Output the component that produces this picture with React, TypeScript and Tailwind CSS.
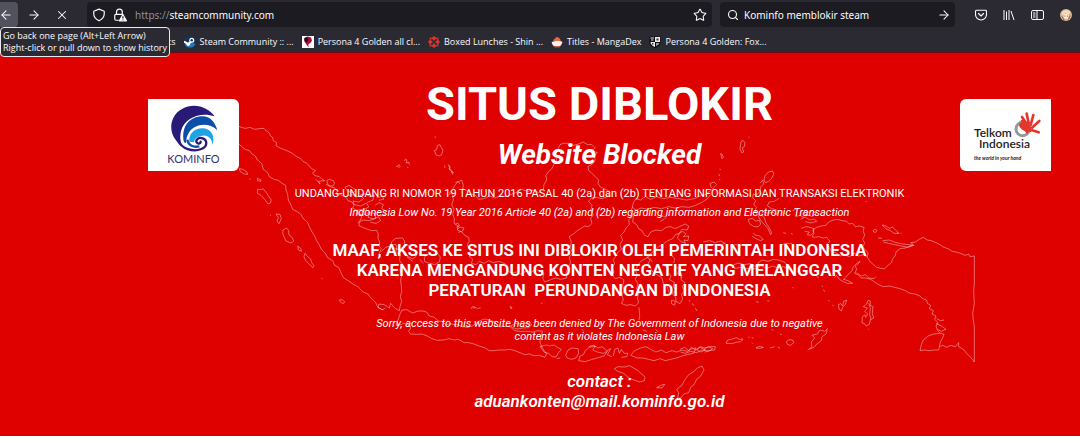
import type { ReactNode } from "react";
import { ArrowLeft, ArrowRight, Search, Star, X } from "lucide-react";

const bookmarks: { label: string; icon: ReactNode }[] = [
  { label: "Steam Community :: ...", icon: <SteamIcon /> },
  { label: "Persona 4 Golden all cl...", icon: <PersonaIcon /> },
  { label: "Boxed Lunches - Shin ...", icon: <FandomIcon /> },
  { label: "Titles - MangaDex", icon: <MangaDexIcon /> },
  { label: "Persona 4 Golden: Fox...", icon: <ShieldLogo /> },
];

function SteamIcon() {
  return (
    <svg viewBox="0 0 24 24" className="size-3 shrink-0">
      <circle cx="12" cy="12" r="12" fill="#12355f" />
      <path d="M1 16a12 12 0 0 0 22 0L14 12z" fill="#2a77b5" />
      <path d="M0 11l9 5 5-5" stroke="#fff" strokeWidth="4" fill="none" />
      <circle cx="15.500" cy="8.500" r="5" fill="#fff" />
      <circle cx="15.500" cy="8.500" r="2.500" fill="#12355f" />
      <circle cx="8.500" cy="16.500" r="3.500" fill="#fff" />
    </svg>
  );
}

function PersonaIcon() {
  return (
    <svg viewBox="0 0 24 24" className="size-3 shrink-0">
      <path d="M0 0h24v24H0z" fill="#fff" />
      <path d="M4 4l7-3 7 2 2 6-3 5-4 2 0 7-4-6-4-6z" fill="#a01038" />
      <path d="M5 5l5-3 3 5-4 6-4-3z" fill="#24101c" />
    </svg>
  );
}

function FandomIcon() {
  return (
    <svg viewBox="0 0 24 24" className="size-3 shrink-0" fill="#d9362c">
      <path d="M12 0l5 4-5 6-5-6zM12 24l5-4-5-6-5 6zM0 12l4-5 6 5-6 5zM24 12l-4-5-6 5 6 5z" />
      <path d="M3 3l6 1-5 5zM21 3l-6 1 5 5zM3 21l6-1-5-5zM21 21l-6-1 5-5z" />
    </svg>
  );
}

function MangaDexIcon() {
  return (
    <svg viewBox="0 0 24 24" className="size-3 shrink-0">
      <path d="M4 11C5 5 9 6 10 2c6 0 9 4 10 9z" fill="#e5674c" />
      <path d="M1 13c4-4 18-4 22-1l-3 7c-4 3-12 3-16 0z" fill="#fbf3ee" />
      <path d="M4 19c4 2 12 2 16 0l-3 4H7z" fill="#c94f3a" />
    </svg>
  );
}

function ShieldLogo() {
  return (
    <svg viewBox="0 0 24 24" className="size-3 shrink-0">
      <path d="M1 1h22v12c0 6-6 9-11 11C7 22 1 19 1 13z" fill="#0c0c10" />
      <path d="M12 2h10v10H12z" fill="#ececec" />
      <path d="M3 12h9v10c-5-2-9-5-9-10z" fill="#ececec" />
      <path d="M3 4h7M4 8h5" stroke="#ececec" strokeWidth="2" />
      <path d="M15 5h4v4h-4zM6 14h3v3H6z" fill="#33333b" />
      <path d="M14 14h7c-1 3-4 5-7 6z" fill="#9a9aa2" />
    </svg>
  );
}

function ShieldOutline() {
  return (
    <svg viewBox="0 0 24 24" className="size-3.5 shrink-0" fill="none" stroke="currentColor" strokeWidth="2" strokeLinejoin="round">
      <path d="M12 2l9 3.500v4.500c0 5.500-3.500 9.500-9 12-5.500-2.500-9-6.500-9-12V5.500z" />
    </svg>
  );
}

function LockWarning() {
  return (
    <svg viewBox="0 0 24 24" className="size-3.5 shrink-0" fill="none" stroke="currentColor" strokeWidth="2">
      <path d="M6 11V7a5 5 0 0 1 10 0v4" />
      <path d="M10 21H5a2 2 0 0 1-2-2v-6a2 2 0 0 1 2-2h12" />
      <path d="M17 11l6 11H11z" fill="currentColor" strokeLinejoin="round" />
      <path d="M17 14v4M17 19.500v1.500" stroke="#1c1b22" />
    </svg>
  );
}

function PocketIcon() {
  return (
    <svg viewBox="0 0 24 24" className="size-3" fill="none" stroke="currentColor" strokeWidth="2.200" strokeLinecap="round" strokeLinejoin="round">
      <path d="M3 2.500h18a2 2 0 0 1 2 2V11a11 11 0 0 1-22 0V4.500a2 2 0 0 1 2-2z" />
      <path d="M7 9l5 5 5-5" />
    </svg>
  );
}

function LibraryIcon() {
  return (
    <svg viewBox="0 0 24 24" className="size-3" fill="none" stroke="currentColor" strokeWidth="2">
      <path d="M2 2v20M7 5v17M12 2v20M16 4l6 18" />
    </svg>
  );
}

function SidebarIcon() {
  return (
    <svg viewBox="0 0 26 24" className="h-3 w-[13px]" fill="none" stroke="currentColor" strokeWidth="2">
      <rect x="1" y="3" width="24" height="18" rx="3" />
      <path d="M12 3v18M4 8h5M4 12h5M4 16h5" />
    </svg>
  );
}

function Avatar() {
  return (
    <svg viewBox="0 0 24 24" className="size-3">
      <circle cx="12" cy="12" r="12" fill="#d9b48c" />
      <path d="M3 8c4-7 14-8 18-1l-4 4-6-3-6 5z" fill="#f0dcb8" />
      <path d="M8 11l5-2 5 4-2 6-6 1-3-4z" fill="#fbe9df" />
      <path d="M4 15l4 7M20 13l-3 8" stroke="#8b6248" strokeWidth="2" />
      <circle cx="10" cy="14" r="1.200" fill="#7a3d3d" />
      <circle cx="15" cy="14" r="1.200" fill="#7a3d3d" />
    </svg>
  );
}

function KominfoLogo() {
  return (
    <div className="flex h-[72px] flex-col items-center rounded-r-md bg-white pt-1.5">
      <svg viewBox="0 0 144 144" className="size-12 shrink-0" role="img" aria-label="Kominfo">
        <path d="M36 120C-8 96-6 34 36 12c36-20 78-6 98 22C92 20 44 38 33 78c-4 18-2 32 3 42z" fill="#2a1a78" />
        <path d="M42 112C32 66 58 34 98 34c22 0 38 18 44 42C116 50 72 56 56 84c-6 12-8 18-8 30z" fill="#0a50a8" />
        <path d="M58 110C56 84 76 68 100 70c24 2 36 24 28 50-2-24-20-34-38-26-12 4-16 8-18 18z" fill="#1fa3e4" />
        <path d="M22 104c14 28 46 38 72 28 18-6 20-26 4-32-12-4-22 4-18 12 4 6 12 4 12-2" fill="none" stroke="#2a1a78" strokeWidth="7" strokeLinecap="round" />
        <path d="M52 104c2 18 20 24 36 20" fill="none" stroke="#0a50a8" strokeWidth="7" />
      </svg>
      <span className="font-[Lato,sans-serif] text-[11px] leading-3 text-[#35306f]">KOMINFO</span>
    </div>
  );
}

function TelkomLogo() {
  return (
    <div className="relative flex h-[72px] flex-col rounded-l-md bg-white pt-7 pl-3.5 font-[Lato,sans-serif] text-[#222]">
      <svg viewBox="0 0 84 84" className="absolute top-3 left-[54px] size-7" role="img" aria-label="Telkom Indonesia">
        <circle cx="26" cy="54" r="20" fill="none" stroke="#96989b" strokeWidth="9" />
        <path d="M16 38c10-8 24-4 28 8 4 10 0 20-6 24-2-12-12-10-18-18-4-4-6-10-4-14z" fill="#e5352c" />
        <path
          d="M24 30c14 2 24 14 24 30M36 36L24 18M44 36L38 8M50 42L58 12M54 50L76 30M54 58l20 6"
          fill="none"
          stroke="#e5352c"
          strokeWidth="8"
          strokeLinecap="round"
        />
      </svg>
      <span className="text-xs leading-[11px] font-semibold">Telkom</span>
      <span className="pl-[5px] text-xs leading-[11px] font-semibold">Indonesia</span>
      <span className="pt-1.5 text-[5px] leading-[6px] font-bold italic">the world in your hand</span>
    </div>
  );
}

// Outline of the archipelago, drawn at three units to the pixel
function IndonesiaMap() {
  return (
    <svg
      viewBox="0 159 3240 1149"
      className="absolute inset-0 size-full"
      fill="none"
      stroke="#fff"
      strokeOpacity="0.5"
      strokeWidth="2.400"
      strokeLinejoin="round"
      aria-hidden="true"
    >
      {/* Sumatra */}
      <g transform="translate(660 330)">
        <path d="M55 48L67 53 77 55 90 52 104 58 118 56 132 55 139 63 147 68 151 77 158 82 160 92 170 98 168 107 182 115 196 120 207 125 216 129 228 139 241 145 250 155 260 159 268 168 275 176 287 182 278 188 283 196 298 200 306 208 314 212 296 214 300 222 288 208M318 222L330 230 345 234 352 244 348 252 364 255 378 262 384 272 396 276 402 286 398 294 412 302 420 310 425 322 418 335 417 347 428 352 440 357 455 362 470 361 475 372 474 386 479 396 477 408 484 416 478 430 482 442M484 425L497 412 513 408 527 402 530 412 528 425 540 437 539 452 548 465 540 480 545 496 542 512 544 528 545 545 541 560 545 574 540 590 538 602 524 594 512 580 508 594 493 584 477 582 474 592 490 600" />
        <path d="M55 100L64 109 75 118 88 122 96 132 106 138 112 150 125 160 130 178 143 188 148 200 162 208 175 211 186 220 197 226 198 240 203 254 205 270 212 283 218 298 232 305 242 312 250 326 262 336 268 350 276 366 284 378 290 392 298 405 304 418 316 430 322 442 338 452 344 466 356 472 362 486 370 503 386 513 400 523 414 530 428 545 444 552 454 566 466 576 474 592 486 600 496 594" />
        <path d="M58 176l10 2 12 7 3 8-10-1-13-8zM88 206l4 3M112 205l10 4 1 5-11-2zM113 238l10 1 6-3 10 12 7 11 7 10-1 10-8 3-10-14-10-11-12-7zM150 315l3 2M168 312l12 1 4 13-7 15-6-8 4-10zM189 360l11-6 6 8 1 13 10 8 4 10-8 6-15-6-6-13-4-10zM233 408l10 8 1 8-9-4zM255 430l7 9 10 8 3 11 7 9-3 6-11-10-12-13-4-10zM304 504l4 3M358 570l8-1 8 6-4 6-8-4z" />
        <path d="M320 212l8-4 12 4 4 8-6 9-13-3zM375 232l12-6 10 7 11 6-7 9-14-3-8-5zM380 258l18-4 9 7 16-4 8 9-15 10-17-3 4 11 19 4 18-9 6 12-14 8-19 1-4 11 22 4 18-8 16 4 2 14-20 7-18-2-16 8M420 255l15-4 16 9 12-4-5 15-17 6M425 308l14-9 11 10-6 13 17 5 14-7 7 12-13 8-18-3M466 285l12-7 12 6-5 12 13 7-4 12-15 3M470 263l17-4 5 8-15 4" />
        <path d="M528 168l5 2 3-6 5 4-5 6M553 153l4-6 4 4-3 8 9-2 1 7M562 170l2 4M644 80l4 3M643 122l7-3 2-12 8-3 4 9 5 8-4 13-8 4-9-4zM672 171l4 2M684 167l6 4-1 9 6 5 3 9M697 184l5 5" />
        <path d="M515 395l12-10 20-1 7 9-2 15 12-2 13 12 11 8 1 12-10 9-18-9-5-13-16-6-14-3-12-10zM613 442l8-9 18 2 13-5 9 11-3 15-13 8-16-4-15-5zM560 440l18 14M600 448l10 12M752 593l5 3M760 590l12 5" />
      </g>

      {/* Java, Borneo and Sulawesi */}
      <g transform="translate(1200 360)">
        <path d="M0 582L6 570 20 569 38 579 54 573 68 573 80 576 88 588 103 592 115 603 125 604 137 614 151 612 172 614 188 620 203 622 218 618 236 604 252 597 268 600 285 606 283 618 298 620 316 619 330 620 344 632 362 634 380 634 398 636 412 632 428 634 422 650 420 668 427 684 440 702 434 712 418 706 402 707 388 702 374 704 360 698 344 692 330 688 314 690 296 690 282 692 268 692 256 684 240 679 222 672 206 668 192 668 176 658 162 660 148 656 130 660 112 661 96 656 82 648 66 642 50 643 32 642 26 634 32 624 28 614 12 610 2 614 -12 616 -6 600z" />
        <path d="M332 618l14-8 20 1 14-2 16 4-10 10-18 1-17 3-12-4zM215 562l6-2 2 6M233 566l9-3M330 560l6 2-2 5zM423 548l3 4M545 628l6 5" />
        <path d="M420 680l19-5 10 3 13-3 10 7 12 6-9 11-7 12-12-1-10-10-13-3zM497 706L504 690 516 684 534 686 536 700 528 714 514 718 502 714zM470 716l11-2M536 722L540 708 550 704 556 692 568 682 586 678 578 690 592 696 610 700 622 694 612 708 598 712 584 716 570 720 556 725zM566 680L580 676 594 684 606 680 620 692 632 686 622 704 636 710M640 708L644 688 654 684 658 700 664 688 672 700 684 700 680 710 664 712M692 706L704 692 722 684 738 680 752 688 768 696 784 690 798 698 816 692 830 696 846 690 862 694 876 686 888 684 880 700 862 704 846 708 830 714 812 718 796 722 780 716 762 722 746 718 728 714 712 714z" />
        <path d="M643 746l11-6 20 1 14-4 14 8 11 6 10 9 12 11-2 11-14 4-20-7-15-7-13-12-18-6zM833 835L836 818 830 808 846 796 854 780 866 764 880 756 892 744 906 738 912 750 902 768 890 778 882 794 872 802 866 818 852 822 842 834zM770 803l15-8 9-2-8 11zM890 690L900 682 916 690 902 696zM912 688L924 680 938 686 926 694 914 696" />
        <path d="M185 180L172 187 164 197 158 208 149 217 158 225 160 240 155 254 162 268 158 282 163 296 162 310 174 318 172 330 186 336 194 346 206 352 208 364 202 374 208 386 212 398 208 410 218 418 214 430 228 434 238 424 252 430 266 422 280 428 298 424 312 430 324 438 322 452 336 460 350 456 362 462 378 454 392 458 404 448 418 452 432 460 428 474 434 486 450 480 466 474 482 478 500 474 498 458 504 442 512 428 508 412 518 398 510 382 514 366 508 350 520 342 532 332 542 326 554 318 566 320 576 310 572 296 580 284 572 272 576 256 566 244 574 234 590 232 606 236 622 230 630 216 618 208 602 202 594 190 596 180 586 170 578 162 566 152 564 140 578 132 586 120 582 108 592 98 576 92 586 84 576 74 562 74 550 66 536 72 520 76 506 70 490 70 480 74" />
        <path d="M185 180L190 196 188 206 202 212 212 222 226 226 236 238 252 236 268 228 284 234 300 228 318 230 336 222 352 216 366 208 382 214 400 210 416 218 430 208 432 194 440 180 438 166 446 154 456 146 462 132 470 120 466 106 472 92 480 74" />
        <path d="M166 312l8-2 4 8-8 3M172 328l8-7 12 3-4 9-13 4M132 136l4 3M144 133l6 6-3 8 8 4 2 9M166 188l8-4 6 8M150 220l-4 6" />
        <path d="M697 262L700 248 708 236 722 240 736 230 752 238 770 230 790 236 812 232 836 236 860 240 882 236 900 228 916 224 930 214 942 202 950 194 942 186 930 190 934 204M697 262L708 270 724 264 742 268 762 262 784 266 806 260 826 264 846 260 868 262 886 256 904 248 920 238 932 224M697 262L692 276 700 290 698 306 710 314 716 326 726 332 734 346 744 350 752 336 768 330 784 332 798 322 812 320 826 326 842 318 856 312 866 318 862 330 846 328 838 340 826 344 818 356 804 362 790 372 776 380 764 392 752 400 742 412 750 420 744 432 752 446 760 458 774 466 786 474 790 490 802 500 806 516M697 290L686 300 688 314 678 324 672 336 662 346 668 360 660 374 664 388 654 396 648 408 640 418 644 432 636 442 642 456 636 466 646 476 660 472 672 480 668 496 672 512 666 526 670 540 664 550 678 556 692 554 706 558 716 548 712 532 718 518 710 506 714 492 706 478 712 464 706 450 714 436 722 424 736 416 748 410" />
        <path d="M838 340L848 334 858 342 850 350 866 348 864 362 852 360 856 370 842 364 832 354zM793 438l12 6-2 14 10 8-4 14 15 7-5 13 10 9-13 12 11 10 1 13 12 7 8-14-4-14 9-10-6-13 8-12-12-8 3-14-13-5 4-11-10-13M815 540l11 4-2 12-10-5zM836 455l9 6-3 12M867 540l3 5M877 550l4 8M886 564l5 9M717 562l2 25-2 14M728 630l12 4M766 628l8 7M780 305l12-7 8-8-14-2-6 8M816 408l8 7-3 14M750 415l7 11" />
      </g>

      {/* Maluku and Papua */}
      <g transform="translate(2040 360)">
        <path d="M183 65l6-4 6 8-2 11-6 3 4 13-6 2-5-12zM122 101l5 2 3 9-4 4zM119 146l3 4M116 162l3 6M118 178l2 3M206 50l2 3M556 243l3 3" />
        <path d="M252 180l3-13 10-11 13-3 3 10-6 12-11 10-8 3zM240 190l8-10 3 12-9 9-2 13-11 12-9-4-2 11 9 9-6 12 9 8-5 10 8 12 8 16 11 12 12 14 8 18 3-5-7-15-10-15-5-16-9-8 5-10 14 5 16-3 11 6 7-8-10-6-13-3-12-9 6-11 15-2 14-9M205 298l12-3 10 8 11-2 4 11-8 9-14-2-12-9zM219 340l9 6 9 1 13 11-8 4-14-6-11-7M310 338l8 2M333 340l5 3" />
        <path d="M70 365l20-3 15 6 17-5 14 7-15 5-19-2-16 3M150 378l18-4 15 3M298 380l15-9 21-1 9 8" />
        <path d="M338 272L348 268M346 290L360 286 372 292M368 280l8-8 10 5 12-5 9 9-10 8-15-4zM362 298l14-7 13 9 14-3 7 7-17 5-17-4M364 325L378 320 390 322 402 326 400 338 392 346 382 344 388 336 374 334" />
        <path d="M404 352L396 350 402 340 398 330 410 322 424 318 438 316 446 306 460 300 472 298 486 302 500 304 508 312 518 310 526 320 538 318 552 322 550 334 554 346 548 358 554 370 548 380 556 390 564 398 562 412 570 424 580 434 590 442 602 445 614 446 624 436 634 428 638 416 646 406 648 396 660 386 676 384 690 378 700 374 692 368 706 366 718 358 730 352 742 360 754 362 768 368 780 374 792 382 804 386 816 394 828 396 842 400 856 406 866 402 870 410 883 408V490L881 512 883 550 878 580 880 600 883 620V726L872 712 860 700 850 688 836 680 836 668 826 680 812 676 800 682 788 676 778 680 776 690 762 690 748 692 734 690 720 692 724 674 730 660 744 648 762 642 780 640 792 642 788 654 782 664 778 678M780 640L772 630 768 618 774 608 764 598 768 588 756 582 760 572 748 566 752 556 742 550 740 540 728 536 720 528 706 522 690 520 676 512 660 506 644 502 628 498 610 500 596 494 584 486 572 478 558 474 544 474 534 464 524 460 530 448 526 438 536 430 540 424 530 430 520 440 516 452 506 462 498 470 490 478 504 482 518 490 502 490 488 484 476 476 470 466 462 474M404 352L416 350 428 354 440 352 450 364 440 372 448 384 456 396 468 398 480 408 494 404 508 410 524 400 536 408 550 404 562 412M530 458L544 468 556 464 566 474 582 476 588 470M768 610L784 618 798 628 784 634 772 628M770 596L782 602 792 600" />
        <path d="M580 332l5-5 6 4-4 6-6-1zM606 315l12 3 11 7 8-4 9 8 11 11-15 0-11-8-13-6zM594 354l12 1M608 362L628 360 648 368 668 372 686 374 702 376 684 382 664 378 644 374 626 370 610 366M651 338l4 3M662 339l3 1" />
        <path d="M160 435l14-6 19 5 17-3 15 8 16-1-9 10-18-4-17 2-16-4-18 4zM233 430L246 420 264 424 280 418 296 420 312 426 326 438 336 448 322 446 310 440 294 444 278 438 262 444 246 440zM254 405l8 3M370 462l9-2M410 470l7 3M337 502l4 2M262 542l6 2M228 545l8 2M425 497l4 4M430 509l4 6M445 540l3 4M457 555l4 3" />
        <path d="M475 554l8-3 5 7 3-14 9-4-4 13-8 9-4 11-7-6zM550 560l10-8 4-11 7 2-1 13 9 4-2 20 4 14-10 5-3 14-10 5-4-7-8-2 1-18 7-7 3 8 6-10-9-7 8-11zM566 550l5 13-2 20 4 16M564 626l3 3" />
        <path d="M138 670l5-10 14-3 12-4 9 5 11-1-7 8-14 2-11 4-10-1zM205 651l4 2M215 652l6 3M216 668l3 3M228 684l10-5 12 3-9 3zM270 684l14-4M293 681l7 4M319 665l8-6 11 1 3 8-9 8-10-3zM275 628l5 3M383 690L396 680 394 666 404 654 396 646 412 642 420 630 434 634 442 626 438 642 426 650 424 662 410 672 402 682 388 688M0 688L14 682 26 692 34 682 46 690 60 680 74 684 90 680 106 680 104 690 84 692 66 690 50 698 32 694 16 700 2 696M300 642l5 2M410 622l4 5" />
      </g>
    </svg>
  );
}

export default function App() {
  return (
    <div className="bg-white font-['Noto_Sans',sans-serif] text-[#fbfbfe]">
      <header className="relative border-b border-[#6b0a10] bg-[#2b2a33] pt-0.5">
        <div className="flex h-[25px] items-center">
          <button aria-label="Back" className="flex h-full w-[18px] items-center rounded-r-sm bg-[#52525e]">
            <ArrowLeft className="-ml-px size-[14px]" strokeWidth={1.8} />
          </button>
          <button aria-label="Forward" className="ml-[9px] flex size-[14px] items-center">
            <ArrowRight className="size-[14px]" strokeWidth={1.8} />
          </button>
          <button aria-label="Stop" className="ml-[14px] flex size-[14px] items-center">
            <X className="size-[14px]" strokeWidth={1.8} />
          </button>
          <div className="ml-[18px] flex h-full min-w-0 flex-1 items-center rounded-sm bg-[#1c1b22] pr-[5px] pl-[5px]">
            <ShieldOutline />
            <span className="ml-[7px] flex">
              <LockWarning />
            </span>
            <label htmlFor="address" className="ml-2 pt-px text-[10px] text-[#8f8f9a]">
              https://
            </label>
            <input
              id="address"
              aria-label="Address"
              defaultValue="steamcommunity.com"
              className="min-w-0 flex-1 bg-transparent pt-px text-[10px] outline-none"
            />
            <button aria-label="Bookmark this page">
              <Star className="size-[14px]" strokeWidth={1.8} />
            </button>
          </div>
          <form className="ml-2 flex h-full w-[235px] items-center rounded-sm bg-[#1c1b22] pr-1 pl-[7px]">
            <Search className="size-3 shrink-0" strokeWidth={2.2} />
            <input
              aria-label="Search"
              defaultValue="Kominfo memblokir steam"
              className="ml-[5px] min-w-0 flex-1 bg-transparent pt-px text-[10px] outline-none"
            />
            <button type="button" aria-label="Go">
              <ArrowRight className="size-[14px]" strokeWidth={1.8} />
            </button>
          </form>
          <div className="ml-5 flex items-center gap-4 pr-2">
            <button aria-label="Save to Pocket">
              <PocketIcon />
            </button>
            <button aria-label="Library">
              <LibraryIcon />
            </button>
            <button aria-label="Sidebars">
              <SidebarIcon />
            </button>
            <button aria-label="Account">
              <Avatar />
            </button>
          </div>
        </div>

        <nav className="flex h-[25px] items-center gap-2 pt-1 pl-[168px] font-['Open_Sans',sans-serif] text-[9px] whitespace-nowrap">
          <span>ts</span>
          {bookmarks.map((b) => (
            <a key={b.label} href="#" className="flex items-center gap-1">
              {b.icon}
              {b.label}
            </a>
          ))}
        </nav>

        <div
          role="tooltip"
          className="absolute top-[27px] left-0 z-10 rounded-sm border border-[#e8e8ee] bg-[#2b2a33] px-0.5 py-0.5 font-['Open_Sans',sans-serif] text-[9px] leading-3 whitespace-nowrap"
        >
          Go back one page (Alt+Left Arrow)
          <br />
          Right-click or pull down to show history
        </div>
      </header>

      <main className="relative bg-[#df0000] pt-6 pr-[29px] pb-[25px] pl-[148px] font-[Roboto,sans-serif] text-white">
        <IndonesiaMap />
        <div className="relative grid grid-cols-[91px_1fr_91px] items-start">
          <div className="pt-[22px]">
            <KominfoLogo />
          </div>
          <div className="text-center">
            <h1 className="text-[47px] leading-[54px] font-bold">SITUS DIBLOKIR</h1>
            <p className="mt-2 text-[28px] leading-8 font-bold italic">Website Blocked</p>
            <p className="mt-4 text-[11px] leading-[14px]">
              UNDANG-UNDANG RI NOMOR 19 TAHUN 2016 PASAL 40 (2a) dan (2b) TENTANG INFORMASI DAN TRANSAKSI ELEKTRONIK
            </p>
            <p className="mt-[5px] text-[11px] leading-[14px] italic">
              Indonesia Low No. 19 Year 2016 Article 40 (2a) and (2b) regarding information and Electronic Transaction
            </p>
            <p className="mt-5 text-[17px] leading-5 font-semibold whitespace-pre">
              MAAF, AKSES KE SITUS INI DIBLOKIR OLEH PEMERINTAH INDONESIA
              <br />
              KARENA MENGANDUNG KONTEN NEGATIF YANG MELANGGAR
              <br />
              {"PERATURAN  PERUNDANGAN DI INDONESIA"}
            </p>
            <p className="mt-[17px] text-[11px] leading-[13px] italic">
              Sorry, access to this website has been denied by The Government of Indonesia due to negative
              <br />
              content as it violates Indonesia Law
            </p>
            <p className="mt-7 text-[17px] leading-5 font-semibold italic">
              contact :
              <br />
              <a href="mailto:aduankonten@mail.kominfo.go.id">aduankonten@mail.kominfo.go.id</a>
            </p>
          </div>
          <div className="pt-[22px]">
            <TelkomLogo />
          </div>
        </div>
      </main>
    </div>
  );
}
